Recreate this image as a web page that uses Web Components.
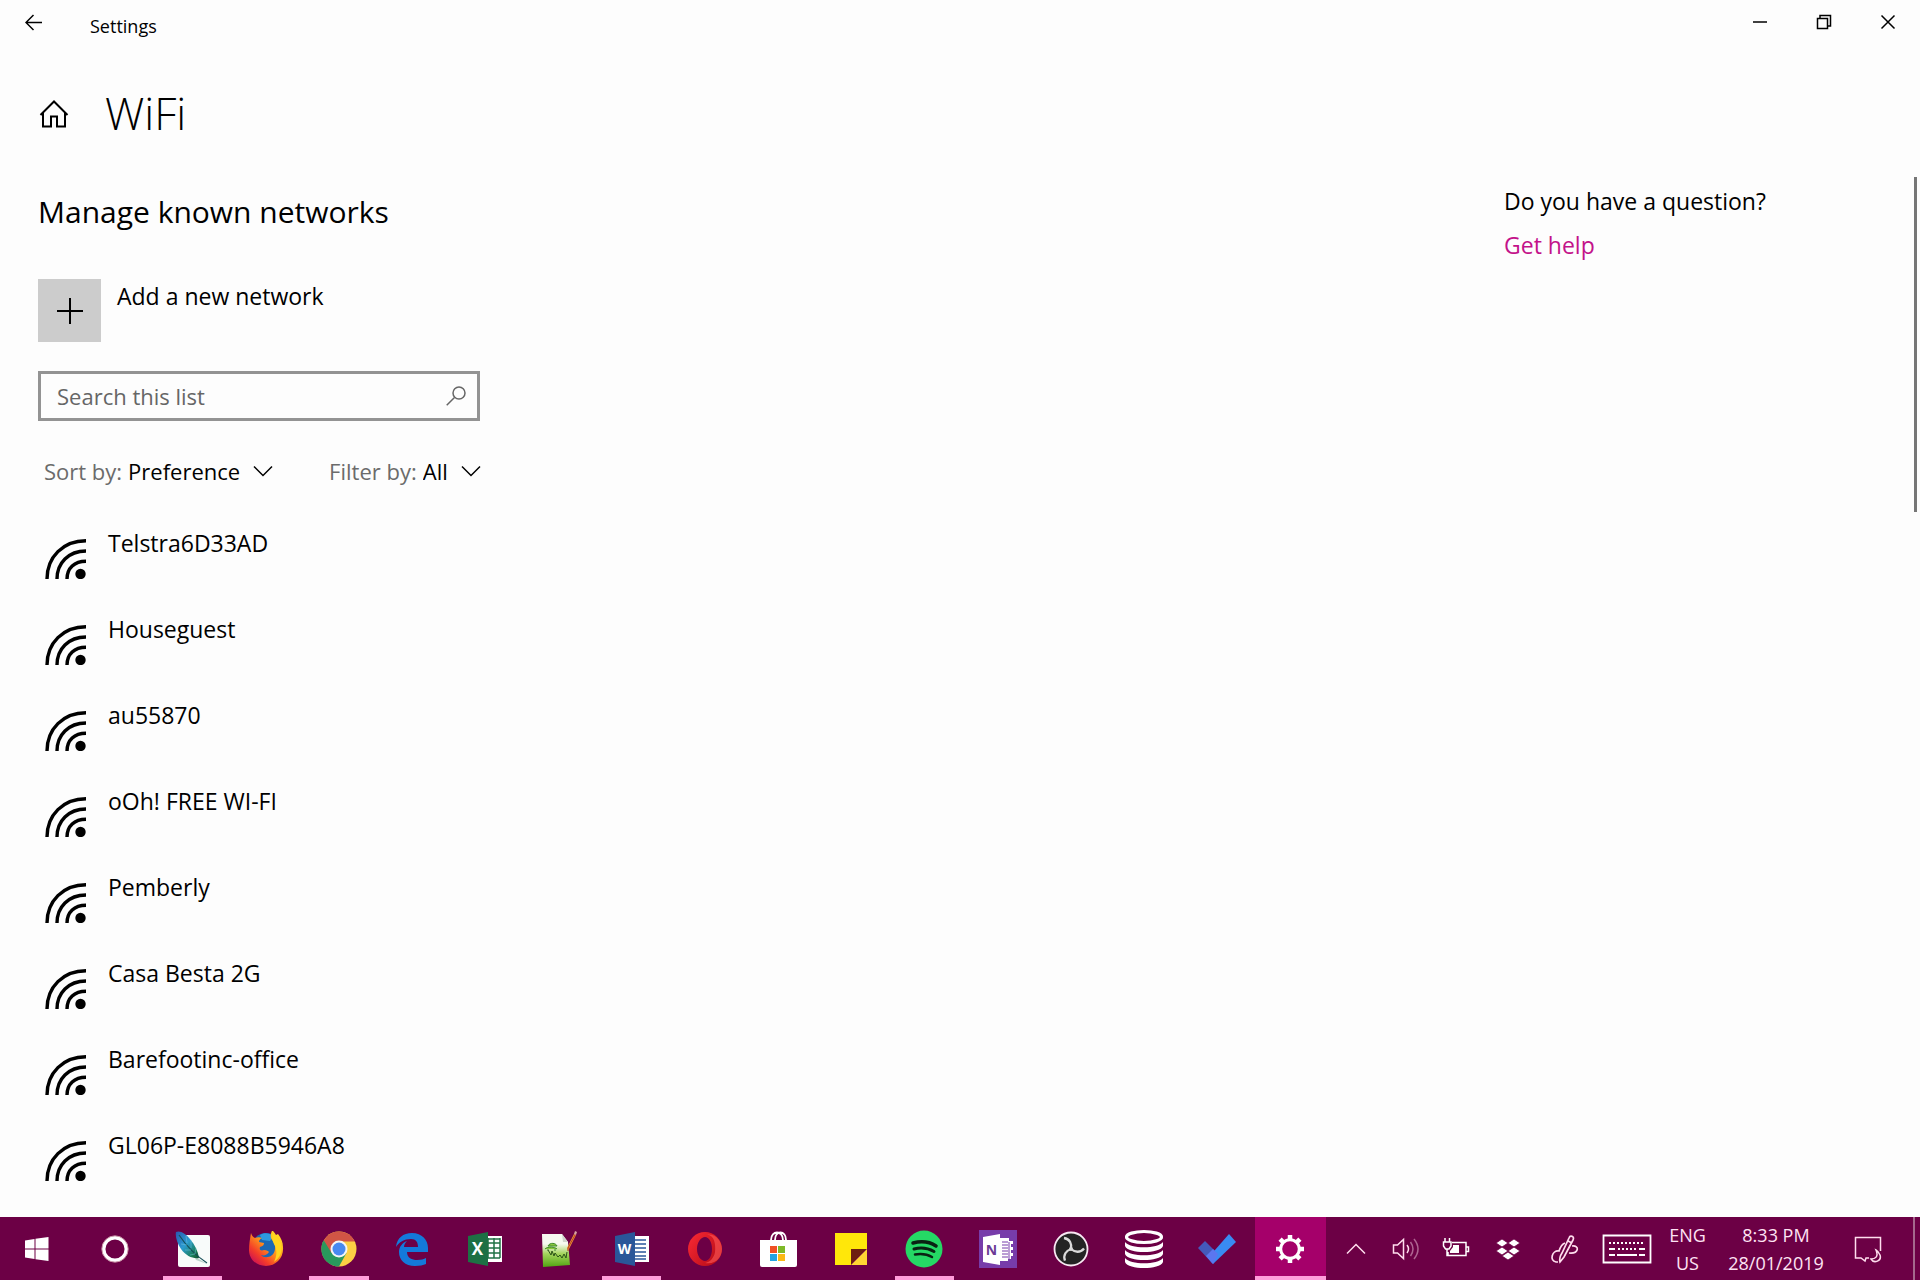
<!DOCTYPE html>
<html lang="en">
<head>
<meta charset="utf-8">
<title>Settings</title>
<style>
  body {
    margin: 0;
    background: #fdfdfd;
    color: #000;
    font-family: "Open Sans", "Noto Sans", sans-serif;
  }
</style>
</head>
<body>
<settings-window></settings-window>

<script>
/**
 * Line icons of the settings window.
 */
const lineIcons = {
  back: '<svg width="18" height="18" viewBox="0 0 18 18"><path d="M17 9.500H1.500M8.500 2 1 9.500 8.500 17"/></svg>',
  minimise: '<svg width="16" height="16" viewBox="0 0 16 16"><path d="M1 8h14"/></svg>',
  restore: '<svg width="16" height="16" viewBox="0 0 16 16"><path d="M1.500 4.500h10v10h-10zM4 4.500v-3h10.500V12h-3"/></svg>',
  close: '<svg width="16" height="16" viewBox="0 0 16 16"><path d="m1.500 1.500 13 13M14.500 1.500l-13 13"/></svg>',
  home: '<svg width="30" height="30" viewBox="0 -1 30 30"><path stroke-width="2" d="M1.500 16 15 2.500 28.500 16M4 14v13.500h8V17.500h6v10h8V14"/></svg>',
  plus: '<svg width="26" height="26" viewBox="0 0 26 26"><path stroke-width="2" d="M13 0v26M0 13h26"/></svg>',
  search: '<svg width="20" height="20" viewBox="0 0 20 20"><circle cx="13" cy="7" r="6"/><path d="M8.500 11.500.700 19.300"/></svg>',
  chevron: '<svg width="20" height="12" viewBox="0 0 20 12"><path d="m1 1.500 9 9 9-9"/></svg>',
  wifi: '<svg width="42" height="40" viewBox="0 0 42 40"><g stroke-width="3.400"><path d="M2 40C2 18 18 1.700 41 1.700"/><path d="M12 40c0-16 11.500-28 29-28"/><path d="M22 40c0-11 7.500-17.800 19-17.800"/></g><circle cx="35.500" cy="35" r="5.200" fill="#000" stroke="none"/></svg>'
}

/**
 * Logos of the pinned programs.
 */
const appIcons = {
  photoshop: `<svg width="36" height="36" viewBox="0 0 36 36">
    <defs><linearGradient id="f" x1="0" y1="0" x2="1" y2="1"><stop offset="0" stop-color="#2a55b0"/><stop offset=".45" stop-color="#2b9bd0"/><stop offset=".8" stop-color="#1c7f5a"/><stop offset="1" stop-color="#14502c"/></linearGradient></defs>
    <rect x="3" y="4" width="32" height="32" rx="2" fill="#f8fbfa"/>
    <path d="M19 25 32 33l-11-4z" fill="#bcd3cb"/>
    <path d="M1 1C5-1 11 3 15 8c5 6 8 12 9 19-6 1-13-2-18-9C2 12 0 5 1 1z" fill="url(#f)"/>
    <path d="M4 4c6 9 13 18 28 28" fill="none" stroke="#164f58" stroke-width="1.200"/>
    <path d="m6 13 6 1m-2 5 6 0m-1 5 5-1M11 5l1 7m4-3v8m5 0-1 6" fill="none" stroke="#75c6dc" stroke-width=".7" opacity=".7"/>
  </svg>`,
  firefox: `<svg width="36" height="36" viewBox="0 0 36 36">
    <defs><linearGradient id="x" x1=".9" y1=".1" x2=".2" y2=".9"><stop offset="0" stop-color="#ffe226"/><stop offset=".45" stop-color="#ff9b1b"/><stop offset=".8" stop-color="#f33b2a"/><stop offset="1" stop-color="#d51a4b"/></linearGradient></defs>
    <circle cx="18" cy="16" r="14" fill="#1a68b5"/>
    <path d="M12 4c4-3 10-2 13 1l-3 5-8-1z" fill="#2e9be0"/>
    <path d="M3 2c1 3 2 4 4 5 2-1 5-1 7 0-2 1-3 2-3 4l5 1c0 2-1 3-4 4-1 3 1 4 4 3 3 0 4 1 5 2-2 3-5 4-8 3 3 4 13 3 14-6 1-6-3-8-4-11-1-4 1-6 1-8 2 2 3 3 4 5l2-1c3 4 5 8 5 13 1 11-7 19-17 19C8 35 1 28 1 19 1 13 2 8 3 2z" fill="url(#x)"/>
    <path d="M25 1c1 4 6 6 8 12 2 7-1 14-7 18 3-6 3-11 1-16-2-4-4-8-2-14z" fill="#ffd51f"/>
  </svg>`,
  chrome: `<svg width="36" height="36" viewBox="0 0 36 36">
    <circle cx="18" cy="18" r="17.500" fill="#fbcf44"/>
    <path d="M18 18 2.500 9.500A17.500 17.500 0 0 0 18 35.500L25.500 22z" fill="#29995c"/>
    <path d="M18 .5A17.500 17.500 0 0 0 2.800 9.300L10.500 22 18 10.500h15.800A17.500 17.500 0 0 0 18 .5z" fill="#d15545"/>
    <circle cx="18" cy="18" r="8.500" fill="#f5f5f5"/><circle cx="18" cy="18" r="6.500" fill="#4889f0"/>
  </svg>`,
  edge: `<svg width="34" height="34" viewBox="0 0 34 34"><path d="M1 15C2 6 8 1 17 1c10 0 16 7 16 15v4H12c0 6 5 8 10 8 4 0 7-1 9-2v6c-3 1-6 2-11 2C10 34 4 28 4 20c0-5 3-9 8-11-2 2-3 4-3 6h14c0-5-2-8-7-8C9 7 4 10 1 15z" fill="#1479da"/></svg>`,
  excel: `<svg width="34" height="34" viewBox="0 0 34 34"><path d="M17 4h17v26H17z" fill="#fff"/><path d="M20 6v20M26 6v20M32 6v20M20 7h12M20 11h12M20 16h12M20 21h12M20 26h12" stroke="#207245" stroke-width="1.500"/><path d="M0 4 20 0v34L0 30z" fill="#1d7044"/><text x="9.500" y="23" text-anchor="middle" font-size="17" font-weight="700" fill="#fff">X</text></svg>`,
  notepad: `<svg width="38" height="38" viewBox="0 0 38 38">
    <defs><linearGradient id="n" x1="0" y1="0" x2="0" y2="1"><stop offset=".3" stop-color="#f6f9f0"/><stop offset=".6" stop-color="#a4d45c"/><stop offset="1" stop-color="#51a512"/></linearGradient></defs>
    <path d="M2 4h20l6 8 2 23-27 2z" fill="url(#n)"/><path d="m22 4 1 8h5z" fill="#cfd4cc"/>
    <path d="M8 16c2-4 8-3 9 0zM5 19c3-3 10-2 12 0M8 19v2m7-2v2" fill="#8ac63e" stroke="#3d8a2c"/>
    <path d="m8 20 3 5 1-4 2 5 1-3 3 4 2-2 2 3 2-4 2 4 1-6" fill="none" stroke="#2b5317"/>
    <path d="m28 21-1-3L34 4l2 1z" fill="#ef983b"/><path d="m34 4 1-3 2 1-1 3z" fill="#d8a3a0"/><path d="M28 21v-3l7-13" fill="none" stroke="#b7421e"/>
  </svg>`,
  word: `<svg width="34" height="34" viewBox="0 0 34 34"><path d="M17 4h17v26H17z" fill="#fff"/><path d="M18 8h13M18 12h13M18 16h13M18 20h13M18 24h13M18 27h13" stroke="#2b579a" stroke-width="1.500"/><path d="M0 4 20 0v34L0 30z" fill="#2a5699"/><text x="9.500" y="22" text-anchor="middle" font-size="14" font-weight="700" fill="#fff">W</text></svg>`,
  opera: `<svg width="36" height="36" viewBox="0 0 36 36"><defs><linearGradient id="o" x1="0" y1="0" x2="1" y2=".7"><stop offset="0" stop-color="#fb2a35"/><stop offset="1" stop-color="#b80d18"/></linearGradient></defs><path fill="url(#o)" fill-rule="evenodd" d="M18 1a17 17 0 1 0 0 34 17 17 0 0 0 0-34zm0 5c4 0 7 5 7 12s-3 12-7 12-8-5-8-12 4-12 8-12z"/><path d="M18 4c9-2 11 9 10 17-1 6-5 10-10 11 11 2 17-6 17-14S28 1 18 4z" fill="#ff5a58" opacity=".6"/></svg>`,
  store: `<svg width="38" height="38" viewBox="0 0 38 38"><path d="M12 10c0-10 12-10 12 0M16 10c0-10 11-10 11 0" fill="none" stroke="#fff" stroke-width="1.800"/><path d="M1 10h37v25q0 2-2 2H3q-2 0-2-2z" fill="#fff"/><path d="M11 16h7v7h-7z" fill="#f05125"/><path d="M19 16h7v7h-7z" fill="#7eb928"/><path d="M11 24h7v7h-7z" fill="#23a3e2"/><path d="M19 24h7v7h-7z" fill="#fbb816"/></svg>`,
  notes: `<svg width="34" height="34" viewBox="0 0 34 34"><path d="M1 1h32v16H17v16H1z" fill="#ffe70a"/><path d="M33 17v16H17z" fill="#ffd633"/><path d="M17 17h15L17 32z" fill="#6d2010"/></svg>`,
  spotify: `<svg width="38" height="38" viewBox="0 0 38 38"><circle cx="19" cy="19" r="18.500" fill="#25d865"/><g fill="none" stroke="#0a2213" stroke-linecap="round"><path d="M8 13c8-2 17-1 23 3" stroke-width="3.500"/><path d="M9 19c7-2 14-1 20 2.500" stroke-width="3"/><path d="M10 24.500c6-1 11-1 17 2.500" stroke-width="2.500"/></g></svg>`,
  onenote: `<svg width="38" height="38" viewBox="0 0 38 38"><path fill="#773caa" d="M0 0h38v38H0z"/><path d="M20 8h10v3h4v3h-2v3h2v3h-2v3h2v3h-2v3h-3v2h-9z" fill="#fff"/><path d="M23 12h6M23 15h6M23 18h6M23 21h6M23 24h6M23 27h6M30 12v17" stroke="#773caa" stroke-width="1"/><path d="M4 7 21 4v31L4 32z" fill="#fff"/><text x="12.500" y="24.500" text-anchor="middle" font-size="14" font-weight="700" fill="#6b3a96">N</text></svg>`,
  obs: `<svg width="36" height="36" viewBox="0 0 36 36"><circle cx="18" cy="18" r="16.500" fill="#242424" stroke="#f8e8f2" stroke-width="1.800"/><g fill="none" stroke="#dadada" stroke-width="2.300"><path id="b" d="M18 18c1-5-1-10-7-11"/><use href="#b" transform="rotate(120 18 18)"/><use href="#b" transform="rotate(240 18 18)"/></g><circle cx="18" cy="18" r="2" fill="#dadada"/></svg>`,
  database: `<svg width="40" height="40" viewBox="0 0 40 40"><ellipse cx="20" cy="8" rx="17.500" ry="5.500" fill="none" stroke="#fff" stroke-width="3.200"/><path d="M1 13c5 7 33 7 38 0v4c-3 8-35 8-38 0zM1 21c5 7 33 7 38 0v4c-3 8-35 8-38 0zM1 29c5 7 33 7 38 0v4c-3 8-35 8-38 0z" fill="#fff"/></svg>`,
  todo: `<svg width="40" height="34" viewBox="0 0 40 34"><path d="m1 16 7-7 13 13-6 9z" fill="#4459bb"/><path d="m11 26 21-24 7 8-23 22z" fill="#398bf2"/><path d="m9 24 7-7 5 5-5 10z" fill="#5b76ef"/></svg>`,
  settings: `<svg width="30" height="30" viewBox="0 0 30 30"><g stroke="#fff" fill="none"><circle cx="15" cy="15" r="9.300" stroke-width="3"/><path id="t" d="M15 1v5M15 24v5" stroke-width="4.500"/><use href="#t" transform="rotate(45 15 15)"/><use href="#t" transform="rotate(90 15 15)"/><use href="#t" transform="rotate(135 15 15)"/></g></svg>`
}

/**
 * Icons of the start area and the notification area.
 */
const trayIcons = {
  start: '<svg width="24" height="24" viewBox="0 0 24 24"><path d="M0 3.500 9.500 2v9.500H0zM10.500 1.800 23.500 0v11.500h-13zM0 12.500h9.500V22L0 20.500zM10.500 12.500h13V24l-13-1.800z" fill="#fff"/></svg>',
  cortana: '<svg width="28" height="28" viewBox="0 0 28 28"><circle cx="14" cy="14" r="11.300" fill="none" stroke="#fff" stroke-width="3.500"/><circle cx="14" cy="14" r="13.200" fill="none" stroke="#c9a" /></svg>',
  more: '<svg width="20" height="12" viewBox="0 0 20 12"><path d="m1 10.500 9-9 9 9" fill="none" stroke="#fde" stroke-width="1.500"/></svg>',
  volume: '<svg width="28" height="24" viewBox="0 0 28 24"><g fill="none" stroke="#fde" stroke-width="1.500"><path d="M1.500 8h4l6-5.500v19l-6-5.500h-4z"/><path d="M15 8q3 4 0 8"/><g opacity=".45"><path d="M18.500 5q5 7 0 14M22 2q8 10 0 20"/></g></g></svg>',
  battery: '<svg width="28" height="22" viewBox="0 0 28 22"><g fill="none" stroke="#fff" stroke-width="1.500"><path d="M10 4.500h14v13H6V14M24 9h2.500v4.500H24M3 0v4M7.500 0v4M1.500 4h7.500v4l-2 3H3.500l-2-3zM5 11v6.500h3"/></g><path d="M11 7h6v8H8v-2l3-4z" fill="#fff"/></svg>',
  dropbox: '<svg width="24" height="22" viewBox="0 0 24 22"><path d="m6 1 6 4-6 4-6-4zM18 1l6 4-6 4-6-4zM6 9l6 4-6 4-6-4zM18 9l6 4-6 4-6-4zM12 14l6 4-6 4-6-4z" fill="#fff" stroke="#6c0045" stroke-width=".8"/></svg>',
  pen: '<svg width="30" height="30" viewBox="0 0 30 30"><g fill="none" stroke="#fde" stroke-width="1.700"><path d="M11 28c-1-4 0-6 2-9L20 4c1-3 6-2 4 2l-9 17zM19 7l4 2"/><path d="M16 9c-3 1-5 5-6 8-7-1-10 10-3 11h2M23 12c8-1 7 8-3 7"/></g></svg>',
  keyboard: '<svg width="50" height="30" viewBox="0 0 50 30"><g fill="none" stroke="#fff"><path stroke-width="1.800" d="M1.500 1.500h47v27h-47z"/><path stroke-width="2" stroke-dasharray="2 2" d="M7 9h36M16 15h19"/><path stroke-width="2" d="M7 15h6M37 15h6M7 21h6M15 21h20M37 21h6"/></g></svg>',
  action: '<svg width="28" height="28" viewBox="0 0 28 28"><g fill="none" stroke="#fde" stroke-width="1.500"><path d="M15 23h-3l-1 3-4-3H1.500V2.500h25V16"/><path d="M22 15c3 7-1 9-5 9 3 5 11 2 9-4-1-2-2-4-4-5z"/></g></svg>'
}

/**
 * Defines a custom element whose shadow root is cloned from a template.
 *
 * @param {string} name - The tag name.
 * @param {Function} markup - Returns the markup for the element.
 */
function define (name, markup) {
  customElements.define(name, class extends HTMLElement {
    connectedCallback () {
      if (this.shadowRoot) return
      const template = document.createElement('template')
      template.innerHTML = `
        <style>
          * { box-sizing: border-box; }
          svg { display: block; flex: none; }
          button {
            margin: 0;
            padding: 0;
            border: 0;
            background: none;
            color: inherit;
            font: inherit;
          }
        </style>
        ${markup(this)}`
      this.attachShadow({ mode: 'open' })
        .appendChild(template.content.cloneNode(true))
    }
  })
}

define('line-icon', el => `
  <style>
    :host { display: block; flex: none; }
    svg { fill: none; stroke: currentColor; stroke-width: 1.5; }
  </style>
  ${lineIcons[el.getAttribute('name')]}
`)

define('title-bar', () => `
  <style>
    :host { display: flex; height: 44px; }
    button { display: grid; place-items: center; width: 64px; }
    .back { width: 68px; }
    .title {
      flex: 1;
      padding: 14px 0 6px 22px;
      font-size: 18px;
      line-height: 24px;
    }
    .controls { display: flex; }
  </style>
  <button class="back" aria-label="Back"><line-icon name="back"></line-icon></button>
  <div class="title"><slot></slot></div>
  <div class="controls">
    <button aria-label="Minimise"><line-icon name="minimise"></line-icon></button>
    <button aria-label="Restore"><line-icon name="restore"></line-icon></button>
    <button aria-label="Close"><line-icon name="close"></line-icon></button>
  </div>
`)

define('page-header', () => `
  <style>
    :host {
      display: flex;
      align-items: center;
      gap: 36px;
      padding: 41px 39px 0;
    }
    h1 { margin: 0; font-size: 44px; font-weight: 300; line-height: 56px; }
  </style>
  <button aria-label="Home"><line-icon name="home"></line-icon></button>
  <h1><slot></slot></h1>
`)

define('add-button', () => `
  <style>
    :host { display: block; }
    button {
      display: flex;
      align-items: flex-start;
      gap: 16px;
      font-size: 23px;
      line-height: 34px;
    }
    .tile {
      display: grid;
      place-items: center;
      width: 63px;
      height: 63px;
      background: #ccc;
    }
  </style>
  <button><span class="tile"><line-icon name="plus"></line-icon></span><slot></slot></button>
`)

define('search-box', el => `
  <style>
    :host {
      display: flex;
      align-items: center;
      box-sizing: border-box;
      width: 442px;
      height: 50px;
      padding-right: 11px;
      border: 3px solid #939393;
      color: #666;
    }
    input {
      flex: 1;
      min-width: 0;
      padding: 0 16px;
      border: 0;
      outline: 0;
      background: none;
      font: inherit;
      font-size: 22px;
    }
    input::placeholder { color: #666; opacity: 1; }
  </style>
  <input type="search" placeholder="${el.getAttribute('placeholder')}" aria-label="${el.getAttribute('placeholder')}">
  <line-icon name="search"></line-icon>
`)

define('drop-down', el => `
  <style>
    :host { display: flex; gap: 6px; height: 34px; font-size: 22px; line-height: 34px; }
    label { color: #6b6b6b; }
    .field { display: grid; align-items: center; }
    .field > * { grid-area: 1 / 1; }
    select {
      appearance: none;
      height: 34px;
      padding: 0 32px 0 0;
      border: 0;
      background: none;
      color: #000;
      font: inherit;
    }
    line-icon { justify-self: end; pointer-events: none; }
  </style>
  <label for="select"><slot></slot></label>
  <div class="field">
    <select id="select"><option>${el.getAttribute('value')}</option></select>
    <line-icon name="chevron"></line-icon>
  </div>
`)

define('wifi-network', () => `
  <style>
    :host {
      display: flex;
      align-items: flex-start;
      gap: 21px;
      height: 86px;
      padding-left: 7px;
      font-size: 23px;
      line-height: 34px;
    }
    line-icon { padding-top: 13px; }
  </style>
  <line-icon name="wifi"></line-icon>
  <slot></slot>
`)

define('help-panel', () => `
  <style>
    :host {
      display: flex;
      flex-direction: column;
      gap: 10px;
      width: 410px;
      padding-top: 43px;
      font-size: 23px;
      line-height: 34px;
    }
    a { color: #c3128a; text-decoration: none; }
  </style>
  <slot></slot>
  <a href="#help">Get help</a>
`)

define('task-button', el => `
  <style>
    :host { display: grid; padding: 0 1px; }
    button { display: grid; place-items: center; margin: 0 6px; }
    :host([running]) button { box-shadow: inset 0 -4px #ff9ddb; }
    :host([active]) button { margin: 0; background: #a5006a; box-shadow: inset 0 -4px #ff9ddb; }
  </style>
  <button aria-label="${el.getAttribute('app')}">${appIcons[el.getAttribute('app')]}</button>
`)

define('task-bar', () => {
  const running = ['photoshop', 'chrome', 'word', 'spotify']
  const tasks = Object.keys(appIcons).map(app =>
    `<task-button app="${app}" ${running.includes(app) ? 'running' : ''} ${app === 'settings' ? 'active' : ''}></task-button>`)
  const tray = ['more', 'volume', 'battery', 'dropbox', 'pen', 'keyboard'].map(name =>
    `<button class="${name}" aria-label="${name}">${trayIcons[name]}</button>`)

  return `
    <style>
      :host {
        display: flex;
        height: 63px;
        background: #6c0045;
        color: #ffe3f4;
        font-size: 18px;
        line-height: 28px;
      }
      button { display: grid; place-items: center; width: 50px; text-align: center; }
      .start { width: 73px; }
      .cortana { width: 83px; }
      .tasks {
        flex: 1;
        display: grid;
        grid-template-columns: repeat(16, 1fr);
      }
      .tray { display: flex; padding-left: 4px; }
      .dropbox { width: 53px; }
      .pen { width: 60px; }
      .keyboard { width: 66px; }
      .language { width: 55px; }
      .clock { width: 122px; }
      .language, .clock { place-content: center; }
      .action { width: 62px; }
      .desktop { width: 7px; margin-left: 14px; border-left: 2px solid #a5688d; }
    </style>
    <button class="start" aria-label="Start">${trayIcons.start}</button>
    <button class="cortana" aria-label="Cortana">${trayIcons.cortana}</button>
    <div class="tasks">${tasks.join('')}</div>
    <div class="tray">
      ${tray.join('')}
      <button class="language"><span>ENG</span><span>US</span></button>
      <button class="clock"><span>8:33 PM</span><span>28/01/2019</span></button>
      <button class="action" aria-label="Notifications">${trayIcons.action}</button>
      <button class="desktop" aria-label="Show desktop"></button>
    </div>
  `
})

define('settings-window', () => {
  const networks = [
    'Telstra6D33AD', 'Houseguest', 'au55870', 'oOh! FREE WI-FI',
    'Pemberly', 'Casa Besta 2G', 'Barefootinc-office', 'GL06P-E8088B5946A8'
  ]

  return `
    <style>
      :host { display: flex; flex-direction: column; min-height: 100vh; }
      main { flex: 1; display: flex; }
      .content { flex: 1; padding: 51px 0 0 38px; }
      h2 { margin: 0 0 47px; font-size: 30px; font-weight: 400; line-height: 40px; }
      search-box { margin: 29px 0 33px; }
      .filters { display: flex; gap: 56px; padding-left: 6px; }
      ul { margin: 38px 0 0; padding: 0; list-style: none; }
      .scrollbar { width: 3px; height: 335px; margin: 36px 3px 0 0; background: #767676; }
    </style>
    <title-bar>Settings</title-bar>
    <page-header>WiFi</page-header>
    <main>
      <section class="content">
        <h2>Manage known networks</h2>
        <add-button>Add a new network</add-button>
        <search-box placeholder="Search this list"></search-box>
        <div class="filters">
          <drop-down value="Preference">Sort by:</drop-down>
          <drop-down value="All">Filter by:</drop-down>
        </div>
        <ul>
          ${networks.map(name => `<li><wifi-network>${name}</wifi-network></li>`).join('')}
        </ul>
      </section>
      <help-panel>Do you have a question?</help-panel>
      <div class="scrollbar"></div>
    </main>
    <task-bar></task-bar>
  `
})
</script>
</body>
</html>
